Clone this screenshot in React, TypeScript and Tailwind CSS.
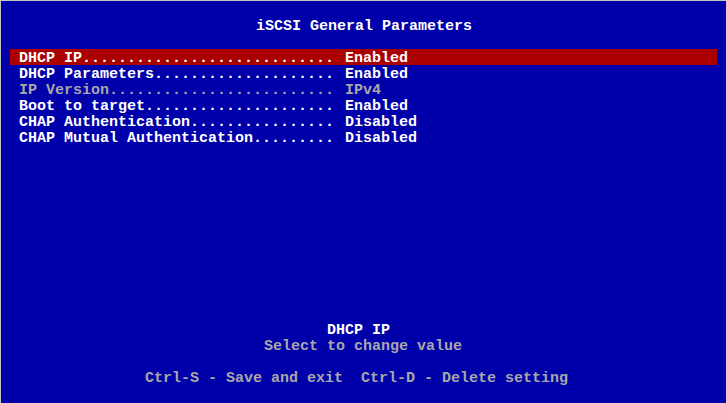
const items = [
  { label: 'DHCP IP', value: 'Enabled' },
  { label: 'DHCP Parameters', value: 'Enabled' },
  { label: 'IP Version', value: 'IPv4', disabled: true },
  { label: 'Boot to target', value: 'Enabled' },
  { label: 'CHAP Authentication', value: 'Disabled' },
  { label: 'CHAP Mutual Authentication', value: 'Disabled' },
];

export default function App() {
  const selected = 0;

  return (
    <div className="w-[726px] h-[403px] overflow-hidden bg-[#0000aa] border-t border-l border-[#c4c4c4] font-['Liberation_Mono',monospace] text-[15px] leading-[20px] font-bold whitespace-pre">
      {/* title */}
      <div className="mt-4 h-4 flex justify-center pl-[1px] text-white">
        iSCSI General Parameters
      </div>

      {/* menu */}
      <div className="mt-4 ml-[9px] w-[707px] flex flex-col">
        {items.map((item, i) => (
          <div
            key={item.label}
            className={
              'h-4 flex pl-[9px] ' +
              (i === selected ? 'bg-[#aa0000] ' : '') +
              (item.disabled ? 'text-[#a8a8a8]' : 'text-white')
            }
          >
            <span className="w-[326px]">{item.label.padEnd(35, '.')}</span>
            <span>{item.value}</span>
          </div>
        ))}
      </div>

      {/* help */}
      <div className="mt-[176px] flex flex-col">
        <div className="h-4 pl-[326px] text-white">DHCP IP</div>
        <div className="h-4 pl-[263px] text-[#a8a8a8]">Select to change value</div>
        <div className="mt-4 h-4 pl-[144px] text-[#a8a8a8]">
          Ctrl-S - Save and exit  Ctrl-D - Delete setting
        </div>
      </div>
    </div>
  );
}
